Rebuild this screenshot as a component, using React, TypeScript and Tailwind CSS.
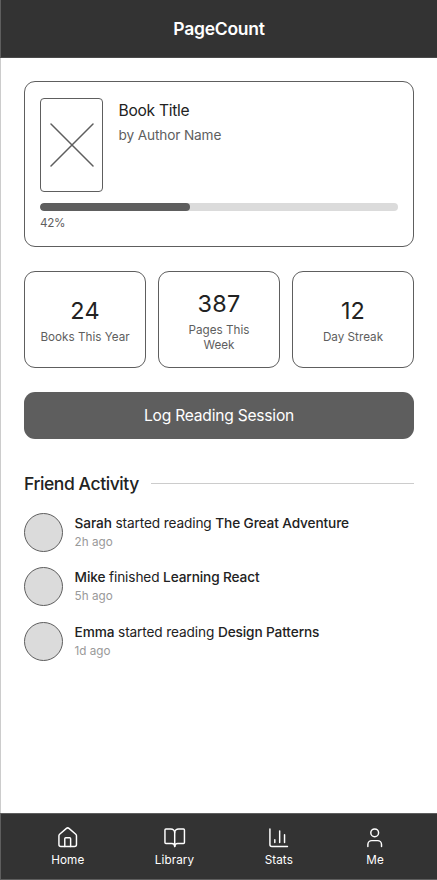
import { BookOpen, House, User } from "lucide-react";
import type { PropsWithChildren } from "react";

const stats = [
  { value: "24", label: "Books This Year" },
  { value: "387", label: "Pages This Week" },
  { value: "12", label: "Day Streak" },
];

const activity = [
  { name: "Sarah", action: "started reading", book: "The Great Adventure", time: "2h ago" },
  { name: "Mike", action: "finished", book: "Learning React", time: "5h ago" },
  { name: "Emma", action: "started reading", book: "Design Patterns", time: "1d ago" },
];

function StatsIcon() {
  return (
    <svg
      width="23.4"
      height="23.4"
      viewBox="0 0 24 24"
      fill="none"
      stroke="currentColor"
      strokeWidth="1.5"
      strokeLinecap="round"
      strokeLinejoin="round"
    >
      <path d="M3 3v16a2 2 0 0 0 2 2h16" />
      <path d="M8 17v-3M13 17V5M18 17V9" />
    </svg>
  );
}

function NavItem({ label, children }: PropsWithChildren<{ label: string }>) {
  return (
    <button type="button" className="flex flex-col items-center gap-[3.5px] text-[11.7px] leading-[16px] tracking-[0.1px]">
      {children}
      <span>{label}</span>
    </button>
  );
}

export default function App() {
  return (
    <div className="flex h-[880px] w-[437px] flex-col bg-white font-['Inter',sans-serif] text-[#222]">
      <header className="flex h-[58px] shrink-0 items-center justify-center border-b border-l border-b-[#4a4a4a] border-l-[#5e5e5e] bg-[#333] pt-[2px] text-white">
        <h1 className="text-[17.5px] font-semibold tracking-[-0.25px]">PageCount</h1>
      </header>

      <main className="flex-1 border-l border-[#ccc] px-[23px] pt-[23px]">
        <section className="h-[166px] rounded-[11px] border border-[#5e5e5e] px-[15.5px] pt-[16px] pl-[15px]">
          <div className="flex gap-[15.6px]">
            <div className="flex h-[94px] w-[63px] items-center justify-center rounded-[4px] border border-[#5e5e5e]">
              <svg width="44" height="44" viewBox="0 0 44 44" stroke="#5e5e5e" strokeWidth="1.5" strokeLinecap="round">
                <path d="M1 1l42 42M43 1L1 43" />
              </svg>
            </div>
            <div>
              <h2 className="pt-px text-[15.6px] leading-[23px] tracking-[-0.3px]">Book Title</h2>
              <p className="mt-[3px] text-[13.65px] leading-[20px] tracking-[-0.14px] text-[#5e5e5e]">by Author Name</p>
            </div>
          </div>
          <div className="mt-[11px] h-[8px] overflow-hidden rounded-full bg-[#dbdbdb]">
            <div className="h-full w-[42%] rounded-full bg-[#5e5e5e]" />
          </div>
          <p className="mt-[4px] text-[11.7px] leading-[16px] tracking-[-0.3px] text-[#5e5e5e]">42%</p>
        </section>

        <section className="mt-[24px] grid h-[97px] grid-cols-3 gap-[12px]">
          {stats.map((stat) => (
            <div
              key={stat.label}
              className="flex flex-col items-center justify-center rounded-[11px] border border-[#5e5e5e] px-[15px] pt-px text-center"
            >
              <p className="text-[23.4px] leading-[31px] tracking-[0.2px]">{stat.value}</p>
              <p className="mt-[4px] text-[11.7px] leading-[14.6px] text-[#5e5e5e]">{stat.label}</p>
            </div>
          ))}
        </section>

        <button
          type="button"
          className="mt-[24px] h-[47px] w-full rounded-[11px] bg-[#5e5e5e] pt-px text-[15.6px] tracking-[-0.22px] text-white"
        >
          Log Reading Session
        </button>

        <section className="mt-[32px]">
          <div className="flex items-center gap-[12px]">
            <h2 className="text-[17.5px] leading-[25px] font-medium tracking-[-0.42px]">Friend Activity</h2>
            <div className="h-px flex-1 bg-[#ccc]" />
          </div>
          <ul className="mt-[16.5px] space-y-[15.6px]">
            {activity.map((item) => (
              <li key={item.name} className="flex h-[39px] gap-[11.6px]">
                <div className="size-[39px] shrink-0 rounded-full border border-[#5e5e5e] bg-[#dbdbdb]" />
                <div>
                  <p className="text-[13.65px] leading-[20px] tracking-[-0.12px]">
                    <span className="font-medium">{item.name}</span> {item.action}{" "}
                    <span className="font-medium">{item.book}</span>
                  </p>
                  <p className="mt-[2px] text-[11.7px] leading-[15.6px] text-[#999]">{item.time}</p>
                </div>
              </li>
            ))}
          </ul>
        </section>
      </main>

      <nav className="flex h-[67px] shrink-0 items-center justify-around border-y border-l border-[#5e5e5e] bg-[#333] px-[15px] pt-px text-white">
        <NavItem label="Home">
          <House size={23.4} strokeWidth={1.5} />
        </NavItem>
        <NavItem label="Library">
          <BookOpen size={23.4} strokeWidth={1.5} />
        </NavItem>
        <NavItem label="Stats">
          <StatsIcon />
        </NavItem>
        <NavItem label="Me">
          <User size={23.4} strokeWidth={1.5} />
        </NavItem>
      </nav>
    </div>
  );
}
